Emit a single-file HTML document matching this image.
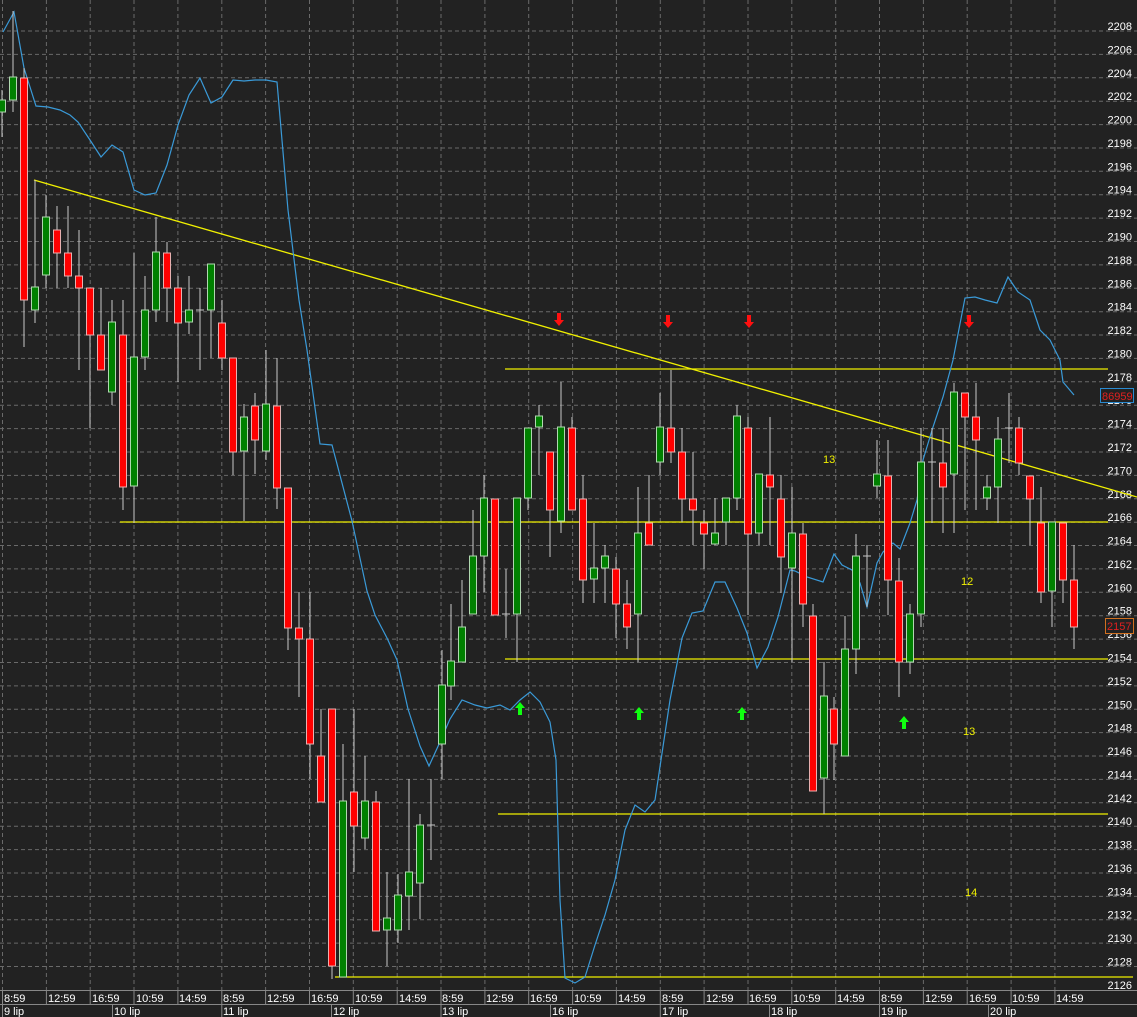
<!DOCTYPE html>
<html><head><meta charset="utf-8"><style>
html,body{margin:0;padding:0;background:#222;}
svg{display:block}
text{font-family:"Liberation Sans",sans-serif;font-size:11px;fill:#fff}
text.yl{fill:#f0f000}
.w{stroke:#c8c8c8;stroke-width:1}
.R{fill:#ff0000;stroke:#e8b0b0;stroke-width:1}
.G{fill:#008000;stroke:#b0d8b0;stroke-width:1}
.g{stroke:#6a6a6a;stroke-width:1;stroke-dasharray:4 3}
.y{stroke:#f0f000;stroke-width:1.3}
</style></head><body>
<svg width="1137" height="1017" xmlns="http://www.w3.org/2000/svg">
<rect width="1137" height="1017" fill="#222"/>
<g class="g">
<line x1="0" y1="31" x2="1137" y2="31"/><line x1="0" y1="54.4" x2="1137" y2="54.4"/><line x1="0" y1="77.8" x2="1137" y2="77.8"/><line x1="0" y1="101.2" x2="1137" y2="101.2"/><line x1="0" y1="124.6" x2="1137" y2="124.6"/><line x1="0" y1="148" x2="1137" y2="148"/><line x1="0" y1="171.3" x2="1137" y2="171.3"/><line x1="0" y1="194.7" x2="1137" y2="194.7"/><line x1="0" y1="218.1" x2="1137" y2="218.1"/><line x1="0" y1="241.5" x2="1137" y2="241.5"/><line x1="0" y1="264.9" x2="1137" y2="264.9"/><line x1="0" y1="288.3" x2="1137" y2="288.3"/><line x1="0" y1="311.7" x2="1137" y2="311.7"/><line x1="0" y1="335" x2="1137" y2="335"/><line x1="0" y1="358.4" x2="1137" y2="358.4"/><line x1="0" y1="381.8" x2="1137" y2="381.8"/><line x1="0" y1="405.2" x2="1137" y2="405.2"/><line x1="0" y1="428.6" x2="1137" y2="428.6"/><line x1="0" y1="452" x2="1137" y2="452"/><line x1="0" y1="475.4" x2="1137" y2="475.4"/><line x1="0" y1="498.8" x2="1137" y2="498.8"/><line x1="0" y1="522.2" x2="1137" y2="522.2"/><line x1="0" y1="545.5" x2="1137" y2="545.5"/><line x1="0" y1="568.9" x2="1137" y2="568.9"/><line x1="0" y1="592.3" x2="1137" y2="592.3"/><line x1="0" y1="615.7" x2="1137" y2="615.7"/><line x1="0" y1="639.1" x2="1137" y2="639.1"/><line x1="0" y1="662.5" x2="1137" y2="662.5"/><line x1="0" y1="685.9" x2="1137" y2="685.9"/><line x1="0" y1="709.3" x2="1137" y2="709.3"/><line x1="0" y1="732.6" x2="1137" y2="732.6"/><line x1="0" y1="756" x2="1137" y2="756"/><line x1="0" y1="779.4" x2="1137" y2="779.4"/><line x1="0" y1="802.8" x2="1137" y2="802.8"/><line x1="0" y1="826.2" x2="1137" y2="826.2"/><line x1="0" y1="849.6" x2="1137" y2="849.6"/><line x1="0" y1="873" x2="1137" y2="873"/><line x1="0" y1="896.4" x2="1137" y2="896.4"/><line x1="0" y1="919.7" x2="1137" y2="919.7"/><line x1="0" y1="943.1" x2="1137" y2="943.1"/><line x1="0" y1="966.5" x2="1137" y2="966.5"/>
</g>
<g class="g">
<line x1="2.5" y1="0" x2="2.5" y2="990"/><line x1="46.4" y1="0" x2="46.4" y2="990"/><line x1="90.2" y1="0" x2="90.2" y2="990"/><line x1="134" y1="0" x2="134" y2="990"/><line x1="177.9" y1="0" x2="177.9" y2="990"/><line x1="221.8" y1="0" x2="221.8" y2="990"/><line x1="265.6" y1="0" x2="265.6" y2="990"/><line x1="309.5" y1="0" x2="309.5" y2="990"/><line x1="353.3" y1="0" x2="353.3" y2="990"/><line x1="397.2" y1="0" x2="397.2" y2="990"/><line x1="441" y1="0" x2="441" y2="990"/><line x1="484.9" y1="0" x2="484.9" y2="990"/><line x1="528.7" y1="0" x2="528.7" y2="990"/><line x1="572.6" y1="0" x2="572.6" y2="990"/><line x1="616.4" y1="0" x2="616.4" y2="990"/><line x1="660.3" y1="0" x2="660.3" y2="990"/><line x1="704.1" y1="0" x2="704.1" y2="990"/><line x1="748" y1="0" x2="748" y2="990"/><line x1="791.8" y1="0" x2="791.8" y2="990"/><line x1="835.7" y1="0" x2="835.7" y2="990"/><line x1="879.5" y1="0" x2="879.5" y2="990"/><line x1="923.4" y1="0" x2="923.4" y2="990"/><line x1="967.2" y1="0" x2="967.2" y2="990"/><line x1="1011.1" y1="0" x2="1011.1" y2="990"/><line x1="1054.9" y1="0" x2="1054.9" y2="990"/>
</g>
<g text-anchor="end">
<text x="1132" y="30">2208</text><text x="1132" y="53.4">2206</text><text x="1132" y="76.8">2204</text><text x="1132" y="100.2">2202</text><text x="1132" y="123.6">2200</text><text x="1132" y="147">2198</text><text x="1132" y="170.3">2196</text><text x="1132" y="193.7">2194</text><text x="1132" y="217.1">2192</text><text x="1132" y="240.5">2190</text><text x="1132" y="263.9">2188</text><text x="1132" y="287.3">2186</text><text x="1132" y="310.7">2184</text><text x="1132" y="334">2182</text><text x="1132" y="357.4">2180</text><text x="1132" y="380.8">2178</text><text x="1132" y="404.2">2176</text><text x="1132" y="427.6">2174</text><text x="1132" y="451">2172</text><text x="1132" y="474.4">2170</text><text x="1132" y="497.8">2168</text><text x="1132" y="521.2">2166</text><text x="1132" y="544.5">2164</text><text x="1132" y="567.9">2162</text><text x="1132" y="591.3">2160</text><text x="1132" y="614.7">2158</text><text x="1132" y="638.1">2156</text><text x="1132" y="661.5">2154</text><text x="1132" y="684.9">2152</text><text x="1132" y="708.3">2150</text><text x="1132" y="731.6">2148</text><text x="1132" y="755">2146</text><text x="1132" y="778.4">2144</text><text x="1132" y="801.8">2142</text><text x="1132" y="825.2">2140</text><text x="1132" y="848.6">2138</text><text x="1132" y="872">2136</text><text x="1132" y="895.4">2134</text><text x="1132" y="918.7">2132</text><text x="1132" y="942.1">2130</text><text x="1132" y="965.5">2128</text><text x="1132" y="988.9">2126</text>
</g>
<g class="y">
<line x1="34" y1="180" x2="1137" y2="497"/>
<line x1="120" y1="522" x2="1108" y2="522"/>
<line x1="505" y1="369" x2="1108" y2="369"/>
<line x1="505" y1="659" x2="1108" y2="659"/>
<line x1="498" y1="814" x2="1108" y2="814"/>
<line x1="335" y1="977" x2="1133" y2="977"/>
</g>
<polyline fill="none" stroke="#3a9ad8" stroke-width="1.2" points="3,32 14,12 24,68 36,106 48,107 60,110 70,115 78,122 90,140 101,157 112,145 123,152 134,190 145,195 156,193 167,165 178,125 189,95 200,78 211,103 222,97 233,80 244,81 255,80 266,80 277,82 288,210 299,300 307,350 320,444 332,445 352,521 367,591 375,615 387,638 397,660 408,709 420,746 429,766 440,742 450,719 462,700 475,705 487,708 500,705 510,710 520,700 530,692 540,702 550,722 556,760 560,900 565,978 575,983 585,977 595,945 605,915 615,880 625,830 635,805 645,812 655,800 670,700 682,638 692,613 703,611 715,582 725,582 737,608 747,633 757,668 768,647 778,617 790,570 795,571 807,577 823,582 834,554 842,565 852,570 860,583 867,607 877,563 883,552 893,543 900,549 910,523 917,500 923,460 933,427 943,397 953,360 965,298 975,297 985,300 997,303 1008,277 1018,292 1030,300 1040,330 1050,340 1060,360 1063,382 1074,395"/>
<g>
<line class="w" x1="2" y1="90" x2="2" y2="137"/><rect class="G" x="-1.5" y="100" width="7" height="12"/>
<line class="w" x1="13" y1="11" x2="13" y2="112"/><rect class="G" x="9.5" y="77" width="7" height="23"/>
<line class="w" x1="24" y1="68" x2="24" y2="347"/><rect class="R" x="20.5" y="78" width="7" height="222"/>
<line class="w" x1="35" y1="180" x2="35" y2="323"/><rect class="G" x="31.5" y="287" width="7" height="23"/>
<line class="w" x1="46" y1="195" x2="46" y2="288"/><rect class="G" x="42.5" y="217" width="7" height="58"/>
<line class="w" x1="57" y1="206" x2="57" y2="288"/><rect class="R" x="53.5" y="230" width="7" height="23"/>
<line class="w" x1="68" y1="206" x2="68" y2="288"/><rect class="R" x="64.5" y="253" width="7" height="23"/>
<line class="w" x1="79" y1="230" x2="79" y2="370"/><rect class="R" x="75.5" y="276" width="7" height="12"/>
<line class="w" x1="90" y1="288" x2="90" y2="428"/><rect class="R" x="86.5" y="288" width="7" height="47"/>
<line class="w" x1="101" y1="288" x2="101" y2="370"/><rect class="R" x="97.5" y="335" width="7" height="35"/>
<line class="w" x1="112" y1="300" x2="112" y2="405"/><rect class="G" x="108.5" y="322" width="7" height="70"/>
<line class="w" x1="123" y1="300" x2="123" y2="510"/><rect class="R" x="119.5" y="335" width="7" height="152"/>
<line class="w" x1="134" y1="253" x2="134" y2="523"/><rect class="G" x="130.5" y="357" width="7" height="129"/>
<line class="w" x1="145" y1="276" x2="145" y2="370"/><rect class="G" x="141.5" y="310" width="7" height="47"/>
<line class="w" x1="156" y1="217" x2="156" y2="322"/><rect class="G" x="152.5" y="252" width="7" height="58"/>
<line class="w" x1="167" y1="242" x2="167" y2="322"/><rect class="R" x="163.5" y="253" width="7" height="35"/>
<line class="w" x1="178" y1="276" x2="178" y2="382"/><rect class="R" x="174.5" y="288" width="7" height="35"/>
<line class="w" x1="189" y1="276" x2="189" y2="334"/><rect class="G" x="185.5" y="310" width="7" height="12"/>
<line class="w" x1="200" y1="288" x2="200" y2="370"/><line class="w" x1="196" y1="310" x2="204" y2="310"/>
<line class="w" x1="211" y1="264" x2="211" y2="358"/><rect class="G" x="207.5" y="264" width="7" height="46"/>
<line class="w" x1="222" y1="300" x2="222" y2="370"/><rect class="R" x="218.5" y="323" width="7" height="35"/>
<line class="w" x1="233" y1="358" x2="233" y2="475"/><rect class="R" x="229.5" y="358" width="7" height="94"/>
<line class="w" x1="244" y1="404" x2="244" y2="521"/><rect class="G" x="240.5" y="417" width="7" height="34"/>
<line class="w" x1="255" y1="393" x2="255" y2="474"/><rect class="R" x="251.5" y="406" width="7" height="34"/>
<line class="w" x1="266" y1="350" x2="266" y2="460"/><rect class="G" x="262.5" y="404" width="7" height="47"/>
<line class="w" x1="277" y1="358" x2="277" y2="509"/><rect class="R" x="273.5" y="406" width="7" height="82"/>
<line class="w" x1="288" y1="488" x2="288" y2="650"/><rect class="R" x="284.5" y="488" width="7" height="140"/>
<line class="w" x1="299" y1="592" x2="299" y2="697"/><rect class="R" x="295.5" y="628" width="7" height="11"/>
<line class="w" x1="310" y1="592" x2="310" y2="779"/><rect class="R" x="306.5" y="639" width="7" height="105"/>
<line class="w" x1="321" y1="709" x2="321" y2="802"/><rect class="R" x="317.5" y="756" width="7" height="46"/>
<line class="w" x1="332" y1="709" x2="332" y2="979"/><rect class="R" x="328.5" y="709" width="7" height="257"/>
<line class="w" x1="343" y1="744" x2="343" y2="977"/><rect class="G" x="339.5" y="801" width="7" height="176"/>
<line class="w" x1="354" y1="709" x2="354" y2="872"/><rect class="R" x="350.5" y="792" width="7" height="34"/>
<line class="w" x1="365" y1="756" x2="365" y2="849"/><rect class="G" x="361.5" y="801" width="7" height="37"/>
<line class="w" x1="376" y1="791" x2="376" y2="931"/><rect class="R" x="372.5" y="802" width="7" height="129"/>
<line class="w" x1="387" y1="872" x2="387" y2="966"/><rect class="G" x="383.5" y="918" width="7" height="12"/>
<line class="w" x1="398" y1="874" x2="398" y2="943"/><rect class="G" x="394.5" y="895" width="7" height="35"/>
<line class="w" x1="409" y1="779" x2="409" y2="930"/><rect class="G" x="405.5" y="872" width="7" height="24"/>
<line class="w" x1="420" y1="814" x2="420" y2="919"/><rect class="G" x="416.5" y="825" width="7" height="58"/>
<line class="w" x1="431" y1="779" x2="431" y2="860"/><line class="w" x1="427" y1="825" x2="435" y2="825"/>
<line class="w" x1="442" y1="650" x2="442" y2="779"/><rect class="G" x="438.5" y="685" width="7" height="59"/>
<line class="w" x1="451" y1="604" x2="451" y2="700"/><rect class="G" x="447.5" y="661" width="7" height="25"/>
<line class="w" x1="462" y1="580" x2="462" y2="662"/><rect class="G" x="458.5" y="627" width="7" height="35"/>
<line class="w" x1="473" y1="510" x2="473" y2="614"/><rect class="G" x="469.5" y="556" width="7" height="58"/>
<line class="w" x1="484" y1="475" x2="484" y2="592"/><rect class="G" x="480.5" y="498" width="7" height="58"/>
<line class="w" x1="495" y1="499" x2="495" y2="615"/><rect class="R" x="491.5" y="499" width="7" height="116"/>
<line class="w" x1="506" y1="569" x2="506" y2="638"/><line class="w" x1="502" y1="614" x2="510" y2="614"/>
<line class="w" x1="517" y1="498" x2="517" y2="662"/><rect class="G" x="513.5" y="498" width="7" height="116"/>
<line class="w" x1="528" y1="428" x2="528" y2="510"/><rect class="G" x="524.5" y="428" width="7" height="70"/>
<line class="w" x1="539" y1="405" x2="539" y2="475"/><rect class="G" x="535.5" y="416" width="7" height="11"/>
<line class="w" x1="550" y1="452" x2="550" y2="557"/><rect class="R" x="546.5" y="452" width="7" height="58"/>
<line class="w" x1="561" y1="382" x2="561" y2="533"/><rect class="G" x="557.5" y="427" width="7" height="94"/>
<line class="w" x1="572" y1="417" x2="572" y2="510"/><rect class="R" x="568.5" y="428" width="7" height="82"/>
<line class="w" x1="583" y1="475" x2="583" y2="603"/><rect class="R" x="579.5" y="499" width="7" height="81"/>
<line class="w" x1="594" y1="523" x2="594" y2="603"/><rect class="G" x="590.5" y="568" width="7" height="11"/>
<line class="w" x1="605" y1="545" x2="605" y2="603"/><rect class="G" x="601.5" y="556" width="7" height="12"/>
<line class="w" x1="616" y1="557" x2="616" y2="638"/><rect class="R" x="612.5" y="569" width="7" height="35"/>
<line class="w" x1="627" y1="580" x2="627" y2="649"/><rect class="R" x="623.5" y="604" width="7" height="23"/>
<line class="w" x1="638" y1="487" x2="638" y2="662"/><rect class="G" x="634.5" y="533" width="7" height="81"/>
<line class="w" x1="649" y1="475" x2="649" y2="545"/><rect class="R" x="645.5" y="523" width="7" height="22"/>
<line class="w" x1="660" y1="393" x2="660" y2="475"/><rect class="G" x="656.5" y="427" width="7" height="35"/>
<line class="w" x1="671" y1="370" x2="671" y2="463"/><rect class="R" x="667.5" y="428" width="7" height="24"/>
<line class="w" x1="682" y1="428" x2="682" y2="522"/><rect class="R" x="678.5" y="452" width="7" height="47"/>
<line class="w" x1="693" y1="452" x2="693" y2="545"/><rect class="R" x="689.5" y="499" width="7" height="11"/>
<line class="w" x1="704" y1="510" x2="704" y2="569"/><rect class="R" x="700.5" y="523" width="7" height="11"/>
<line class="w" x1="715" y1="498" x2="715" y2="545"/><rect class="G" x="711.5" y="533" width="7" height="11"/>
<line class="w" x1="726" y1="498" x2="726" y2="545"/><rect class="G" x="722.5" y="498" width="7" height="24"/>
<line class="w" x1="737" y1="405" x2="737" y2="510"/><rect class="G" x="733.5" y="416" width="7" height="82"/>
<line class="w" x1="748" y1="417" x2="748" y2="615"/><rect class="R" x="744.5" y="428" width="7" height="106"/>
<line class="w" x1="759" y1="474" x2="759" y2="545"/><rect class="G" x="755.5" y="474" width="7" height="59"/>
<line class="w" x1="770" y1="417" x2="770" y2="545"/><rect class="R" x="766.5" y="475" width="7" height="12"/>
<line class="w" x1="781" y1="475" x2="781" y2="593"/><rect class="R" x="777.5" y="499" width="7" height="58"/>
<line class="w" x1="792" y1="487" x2="792" y2="662"/><rect class="G" x="788.5" y="533" width="7" height="35"/>
<line class="w" x1="803" y1="523" x2="803" y2="627"/><rect class="R" x="799.5" y="534" width="7" height="70"/>
<line class="w" x1="813" y1="604" x2="813" y2="791"/><rect class="R" x="809.5" y="616" width="7" height="175"/>
<line class="w" x1="824" y1="662" x2="824" y2="814"/><rect class="G" x="820.5" y="696" width="7" height="82"/>
<line class="w" x1="834" y1="697" x2="834" y2="780"/><rect class="R" x="830.5" y="709" width="7" height="35"/>
<line class="w" x1="845" y1="616" x2="845" y2="756"/><rect class="G" x="841.5" y="649" width="7" height="107"/>
<line class="w" x1="856" y1="534" x2="856" y2="674"/><rect class="G" x="852.5" y="556" width="7" height="93"/>
<line class="w" x1="867" y1="545" x2="867" y2="607"/><line class="w" x1="863" y1="556" x2="871" y2="556"/>
<line class="w" x1="877" y1="440" x2="877" y2="498"/><rect class="G" x="873.5" y="474" width="7" height="12"/>
<line class="w" x1="888" y1="440" x2="888" y2="615"/><rect class="R" x="884.5" y="476" width="7" height="104"/>
<line class="w" x1="899" y1="558" x2="899" y2="697"/><rect class="R" x="895.5" y="581" width="7" height="81"/>
<line class="w" x1="910" y1="604" x2="910" y2="674"/><rect class="G" x="906.5" y="614" width="7" height="48"/>
<line class="w" x1="921" y1="428" x2="921" y2="627"/><rect class="G" x="917.5" y="462" width="7" height="152"/>
<line class="w" x1="932" y1="428" x2="932" y2="523"/><line class="w" x1="928" y1="462" x2="936" y2="462"/>
<line class="w" x1="943" y1="428" x2="943" y2="533"/><rect class="R" x="939.5" y="463" width="7" height="24"/>
<line class="w" x1="954" y1="383" x2="954" y2="533"/><rect class="G" x="950.5" y="392" width="7" height="82"/>
<line class="w" x1="965" y1="393" x2="965" y2="510"/><rect class="R" x="961.5" y="393" width="7" height="24"/>
<line class="w" x1="976" y1="383" x2="976" y2="510"/><rect class="R" x="972.5" y="417" width="7" height="23"/>
<line class="w" x1="987" y1="475" x2="987" y2="510"/><rect class="G" x="983.5" y="487" width="7" height="11"/>
<line class="w" x1="998" y1="417" x2="998" y2="523"/><rect class="G" x="994.5" y="439" width="7" height="48"/>
<line class="w" x1="1009" y1="393" x2="1009" y2="463"/><line class="w" x1="1005" y1="428" x2="1013" y2="428"/>
<line class="w" x1="1019" y1="417" x2="1019" y2="475"/><rect class="R" x="1015.5" y="428" width="7" height="35"/>
<line class="w" x1="1030" y1="476" x2="1030" y2="545"/><rect class="R" x="1026.5" y="476" width="7" height="23"/>
<line class="w" x1="1041" y1="487" x2="1041" y2="603"/><rect class="R" x="1037.5" y="523" width="7" height="69"/>
<line class="w" x1="1052" y1="522" x2="1052" y2="627"/><rect class="G" x="1048.5" y="522" width="7" height="69"/>
<line class="w" x1="1063" y1="523" x2="1063" y2="603"/><rect class="R" x="1059.5" y="523" width="7" height="57"/>
<line class="w" x1="1074" y1="545" x2="1074" y2="649"/><rect class="R" x="1070.5" y="580" width="7" height="47"/>
</g>
<g fill="#ff1010">
<path d="M557,313h4v7h3l-5,6l-5,-6h3z"/>
<path d="M666,315h4v7h3l-5,6l-5,-6h3z"/>
<path d="M747,315h4v7h3l-5,6l-5,-6h3z"/>
<path d="M967,315h4v7h3l-5,6l-5,-6h3z"/>
</g>
<g fill="#10ff10">
<path d="M518,715h4v-7h3l-5,-6l-5,6h3z"/>
<path d="M637,720h4v-7h3l-5,-6l-5,6h3z"/>
<path d="M740,720h4v-7h3l-5,-6l-5,6h3z"/>
<path d="M902,729h4v-7h3l-5,-6l-5,6h3z"/>
</g>
<text class="yl" x="823" y="463">13</text>
<text class="yl" x="961" y="585">12</text>
<text class="yl" x="963" y="735">13</text>
<text class="yl" x="965" y="896">14</text>
<rect x="1100.5" y="388.5" width="33" height="14" fill="#222" stroke="#2a8ad0"/>
<text x="1102" y="400" style="fill:#e02020">86959</text>
<rect x="1105.5" y="618.5" width="28" height="15" fill="#222" stroke="#d07020"/>
<text x="1107" y="630" style="fill:#e02020">2157</text>
<rect x="0" y="990" width="1137" height="27" fill="#222"/>
<line x1="0" y1="990.5" x2="1137" y2="990.5" stroke="#888"/>
<line x1="0" y1="1004.5" x2="1137" y2="1004.5" stroke="#888"/>
<g stroke="#888">
<line x1="2.5" y1="990" x2="2.5" y2="1004"/><line x1="46.4" y1="990" x2="46.4" y2="1004"/><line x1="90.2" y1="990" x2="90.2" y2="1004"/><line x1="134" y1="990" x2="134" y2="1004"/><line x1="177.9" y1="990" x2="177.9" y2="1004"/><line x1="221.8" y1="990" x2="221.8" y2="1004"/><line x1="265.6" y1="990" x2="265.6" y2="1004"/><line x1="309.5" y1="990" x2="309.5" y2="1004"/><line x1="353.3" y1="990" x2="353.3" y2="1004"/><line x1="397.2" y1="990" x2="397.2" y2="1004"/><line x1="441" y1="990" x2="441" y2="1004"/><line x1="484.9" y1="990" x2="484.9" y2="1004"/><line x1="528.7" y1="990" x2="528.7" y2="1004"/><line x1="572.6" y1="990" x2="572.6" y2="1004"/><line x1="616.4" y1="990" x2="616.4" y2="1004"/><line x1="660.3" y1="990" x2="660.3" y2="1004"/><line x1="704.1" y1="990" x2="704.1" y2="1004"/><line x1="748" y1="990" x2="748" y2="1004"/><line x1="791.8" y1="990" x2="791.8" y2="1004"/><line x1="835.7" y1="990" x2="835.7" y2="1004"/><line x1="879.5" y1="990" x2="879.5" y2="1004"/><line x1="923.4" y1="990" x2="923.4" y2="1004"/><line x1="967.2" y1="990" x2="967.2" y2="1004"/><line x1="1011.1" y1="990" x2="1011.1" y2="1004"/><line x1="1054.9" y1="990" x2="1054.9" y2="1004"/>
<line x1="2.5" y1="1004" x2="2.5" y2="1017"/><line x1="112.5" y1="1004" x2="112.5" y2="1017"/><line x1="221.8" y1="1004" x2="221.8" y2="1017"/><line x1="331.5" y1="1004" x2="331.5" y2="1017"/><line x1="441" y1="1004" x2="441" y2="1017"/><line x1="550.5" y1="1004" x2="550.5" y2="1017"/><line x1="660.3" y1="1004" x2="660.3" y2="1017"/><line x1="769.5" y1="1004" x2="769.5" y2="1017"/><line x1="879.5" y1="1004" x2="879.5" y2="1017"/><line x1="988.5" y1="1004" x2="988.5" y2="1017"/>
</g>
<g>
<text x="4" y="1002">8:59</text><text x="48" y="1002">12:59</text><text x="92" y="1002">16:59</text><text x="136" y="1002">10:59</text><text x="179" y="1002">14:59</text><text x="223" y="1002">8:59</text><text x="267" y="1002">12:59</text><text x="311" y="1002">16:59</text><text x="355" y="1002">10:59</text><text x="399" y="1002">14:59</text><text x="442" y="1002">8:59</text><text x="486" y="1002">12:59</text><text x="530" y="1002">16:59</text><text x="574" y="1002">10:59</text><text x="618" y="1002">14:59</text><text x="662" y="1002">8:59</text><text x="706" y="1002">12:59</text><text x="749" y="1002">16:59</text><text x="793" y="1002">10:59</text><text x="837" y="1002">14:59</text><text x="881" y="1002">8:59</text><text x="925" y="1002">12:59</text><text x="969" y="1002">16:59</text><text x="1012" y="1002">10:59</text><text x="1056" y="1002">14:59</text>
<text x="4" y="1015">9 lip</text><text x="114" y="1015">10 lip</text><text x="223" y="1015">11 lip</text><text x="333" y="1015">12 lip</text><text x="442" y="1015">13 lip</text><text x="552" y="1015">16 lip</text><text x="662" y="1015">17 lip</text><text x="771" y="1015">18 lip</text><text x="881" y="1015">19 lip</text><text x="990" y="1015">20 lip</text>
</g>
</svg>
</body></html>
